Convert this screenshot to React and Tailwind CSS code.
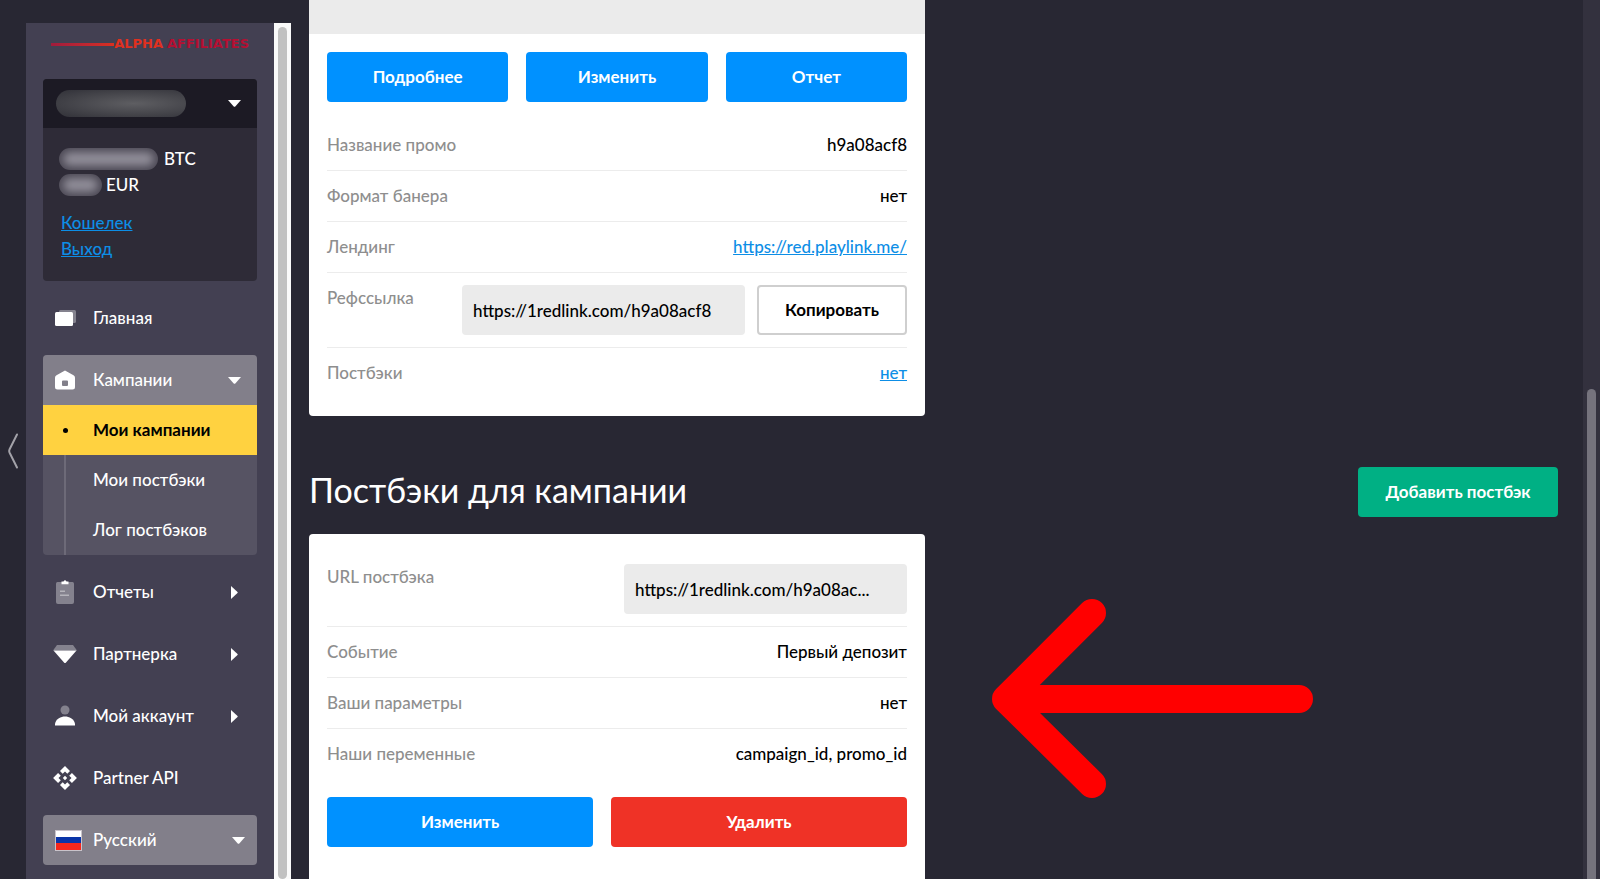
import { useState } from 'react'
import { MdApi } from 'react-icons/md'

const menuItems = [
  { title: "Отчеты", icon: <ReportsIcon />, arrow: true },
  { title: "Партнерка", icon: <DiamondIcon />, arrow: true },
  { title: "Мой аккаунт", icon: <AccountIcon />, arrow: true },
  { title: "Partner API", icon: <MdApi className="h-[26px] w-[26px]" />, arrow: false },
]

const promoButtons = ["Подробнее", "Изменить", "Отчет"]

function HomeIcon() {
  return (
    <svg className="h-6 w-6" viewBox="0 0 24 24" fill="#fff">
      <rect x="6" y="4" width="17" height="13" rx="1.5" opacity="0.35" />
      <rect x="2" y="6" width="18" height="14" rx="1.5" />
    </svg>
  )
}

function CampaignIcon() {
  return (
    <svg className="h-6 w-6" viewBox="0 0 24 24" fill="#fff" fillRule="evenodd">
      <path d="M12 2.500 20.500 7.300Q22 8.200 22 9.800V19Q22 21.500 19.500 21.500H4.500Q2 21.500 2 19V9.800Q2 8.200 3.500 7.300ZM10 12.500Q9 12.500 9 13.500V17Q9 18 10 18H14Q15 18 15 17V13.500Q15 12.500 14 12.500Z" />
    </svg>
  )
}

function ReportsIcon() {
  return (
    <svg className="h-6 w-6" viewBox="0 0 24 24" fill="#fff">
      <path d="M4.500 2H19.500Q21 2 21 3.500V22Q21 24 19 24H5Q3 24 3 22V3.500Q3 2 4.500 2Z" opacity="0.35" />
      <path d="M8.500 1.500H10.500Q12 -0.800 13.500 1.500H15.500V4.200H8.500Z" />
      <path d="M7 10.500H12V12H7ZM7 14.500H16V16H7Z" opacity="0.4" />
    </svg>
  )
}

function DiamondIcon() {
  return (
    <svg className="h-6 w-6" viewBox="0 0 24 24" fill="#fff">
      <path d="M4 3H20L24 8.500H0Z" opacity="0.35" />
      <path d="M0.500 8.500H23.500L13 20.500Q12 21.500 11 20.500Z" />
    </svg>
  )
}

function AccountIcon() {
  return (
    <svg className="h-6 w-6" viewBox="0 0 24 24" fill="#fff">
      <circle cx="12" cy="6" r="4.500" opacity="0.35" />
      <path d="M2 21.500V20C3 14.500 8 12.500 12 12.500S21 14.500 22 20V21.500Z" />
    </svg>
  )
}

function CaretDown() {
  return (
    <svg className="h-[7px] w-[13px]" viewBox="0 0 13 7" fill="#fff">
      <path d="M0 0H13L7.500 6.200Q6.500 7.200 5.500 6.200Z" />
    </svg>
  )
}

function CaretRight() {
  return (
    <svg className="mr-[3px] h-[13px] w-[7px]" viewBox="0 0 7 13" fill="#fff">
      <path d="M0 0V13L6.500 7Q7 6.500 6.500 6Z" />
    </svg>
  )
}

function RuFlag() {
  return (
    <svg className="h-[21px] w-[27px]" viewBox="0 0 27 21">
      <rect width="27" height="21" fill="#c9c3ca" />
      <rect x="1" y="1" width="25" height="6" fill="#fff" />
      <rect x="1" y="7" width="25" height="6" fill="#0b35a8" />
      <rect x="1" y="13" width="25" height="7" fill="#f5271c" />
    </svg>
  )
}

function Row({ label, htmlFor, last, children }) {
  return (
    <div className={last ? "flex items-start justify-between py-3" : "flex items-start justify-between border-b border-[#ececec] py-3"}>
      {
        htmlFor ?
          <label htmlFor={ htmlFor } className="text-[#8e8e8e]">{ label }</label>
          :
          <div className="text-[#8e8e8e]">{ label }</div>
      }
      { children }
    </div>
  )
}

function Sidebar() {

  const [language, setLanguage] = useState("ru")

  const handleLanguageChange = (event) => {
    setLanguage(event.target.value)
  }

  return (
    <aside className="flex shrink-0 pt-[23px] text-white">
      <button aria-label="Свернуть меню" className="flex w-[26px] items-center justify-center">
        <svg className="h-9 w-3" viewBox="0 0 12 36" fill="none" stroke="#a3a2a9" strokeWidth="2" strokeLinecap="round">
          <path d="M10 1.500 2.500 16.500Q1.800 18 2.500 19.500L10 34.500" />
        </svg>
      </button>

      <div className="w-[248px] bg-[#434052] px-[17px]">
        <a href="#" className="mx-2 flex h-14 items-start pt-3.5 font-['DejaVu_Sans'] text-[13px] leading-[14px] font-bold whitespace-nowrap">
          <span className="mt-[6px] h-[3px] flex-1 bg-linear-to-r from-[#a01c3c] to-[#d9301f]"></span>
          <span className="text-[#e0301f]">ALPHA</span>
          <span className="ml-1 text-[#b50f32]">AFFILIATES</span>
        </a>

        <div className="rounded bg-[#2e2b37]">
          <button className="flex h-[49px] w-full items-center justify-between rounded-t bg-[#1c1a24] pr-4 pl-[13px]" aria-label="Аккаунт">
            <span className="h-[27px] w-[130px] rounded-full bg-radial-[at_60%_50%] from-[#5e5e62] to-[#313138]"></span>
            <CaretDown />
          </button>
          <div className="px-4 pt-[18px] pb-[19px] leading-[26px]">
            <div className="flex items-center gap-[6px]">
              <span className="h-[22px] w-[99px] overflow-hidden rounded-full bg-[#4b4854] p-1">
                <span className="block h-full rounded-full bg-[#908d98] blur-[4px]"></span>
              </span>
              BTC
            </div>
            <div className="flex items-center gap-1">
              <span className="h-[22px] w-[43px] overflow-hidden rounded-full bg-[#4b4854] p-1">
                <span className="block h-full rounded-full bg-[#908d98] blur-[4px]"></span>
              </span>
              EUR
            </div>
            <div className="mt-3 flex flex-col items-start pl-[2px]">
              <a href="#" className="text-[#0d8ee6] underline">Кошелек</a>
              <a href="#" className="text-[#0d8ee6] underline">Выход</a>
            </div>
          </div>
        </div>

        <nav className="mt-3 flex flex-col gap-3">
          <a href="#" className="flex h-[50px] items-center pr-4">
            <span className="flex w-11 justify-center"><HomeIcon /></span>
            <span className="ml-[6px]">Главная</span>
          </a>

          <div className="overflow-hidden rounded bg-[#565363]">
            <button className="flex h-[50px] w-full items-center bg-[#827f8a] pr-4 text-left">
              <span className="flex w-11 justify-center"><CampaignIcon /></span>
              <span className="ml-[6px] flex-1">Кампании</span>
              <CaretDown />
            </button>
            <a href="#" className="flex h-[50px] items-center bg-[#ffd240] font-bold text-black">
              <span className="flex w-11 justify-center"><span className="h-[5px] w-[5px] rounded-full bg-black"></span></span>
              <span className="ml-[6px]">Мои кампании</span>
            </a>
            <div className="flex">
              <span className="flex w-11 justify-center"><span className="w-[2px] bg-[#6d6a78]"></span></span>
              <div className="ml-[6px] flex flex-col">
                <a href="#" className="leading-[50px]">Мои постбэки</a>
                <a href="#" className="leading-[50px]">Лог постбэков</a>
              </div>
            </div>
          </div>

          {
            menuItems.map((item, index) =>
              <a href="#" key={ index } className="flex h-[50px] items-center pr-4">
                <span className="flex w-11 justify-center">{ item.icon }</span>
                <span className="ml-[6px] flex-1">{ item.title }</span>
                { item.arrow && <CaretRight /> }
              </a>
            )
          }

          <div className="grid items-center rounded bg-[#827f8a] *:col-start-1 *:row-start-1">
            <span className="ml-3"><RuFlag /></span>
            <span className="mr-3 justify-self-end"><CaretDown /></span>
            <select aria-label="Язык" value={ language } onChange={ handleLanguageChange }
            className="h-[50px] w-full appearance-none bg-transparent pl-[50px] outline-none">
              <option value="ru">Русский</option>
              <option value="en">English</option>
            </select>
          </div>
        </nav>
      </div>

      <div className="w-[17px] bg-[#fafafa] px-1 pt-1">
        <div className="mx-auto h-full w-[9px] rounded-full bg-[#c1c1c1]"></div>
      </div>
    </aside>
  )
}

function App() {
  return (
    <div className="flex h-screen overflow-hidden bg-[#282733] font-[Lato,sans-serif] text-[17px] leading-[26px] font-medium">
      <Sidebar />

      <main className="min-w-0 flex-1 pr-[25px] pl-[18px]">
        <section className="w-full max-w-[616px] overflow-hidden rounded-b bg-white">
          <div className="h-[34px] bg-[#ebebeb]"></div>
          <div className="p-[18px]">
            <div className="grid grid-cols-3 gap-[18px] pb-[18px]">
              {
                promoButtons.map((title, index) =>
                  <button key={ index } className="h-[50px] rounded bg-[#0091ff] font-bold text-white">{ title }</button>
                )
              }
            </div>
            <Row label="Название промо"><span>h9a08acf8</span></Row>
            <Row label="Формат банера"><span>нет</span></Row>
            <Row label="Лендинг"><a href="#" className="text-[#0d8ee6] underline">https://red.playlink.me/</a></Row>
            <Row label="Рефссылка" htmlFor="refLink">
              <div className="flex gap-3">
                <input id="refLink" readOnly value="https://1redlink.com/h9a08acf8"
                className="h-[50px] w-[283px] rounded bg-[#ebebeb] px-[11px] outline-none"></input>
                <button className="h-[50px] w-[150px] rounded border-2 border-[#cfcfcf] font-bold">Копировать</button>
              </div>
            </Row>
            <Row label="Постбэки" last><a href="#" className="text-[#0d8ee6] underline">нет</a></Row>
          </div>
        </section>

        <div className="mt-[51px] flex items-start justify-between">
          <h1 className="text-[34px] leading-[46px] font-normal text-white">Постбэки для кампании</h1>
          <button className="h-[50px] w-[200px] rounded bg-[#00b084] font-bold text-white">Добавить постбэк</button>
        </div>

        <div className="mt-[17px] flex items-start gap-[67px]">
          <section className="w-full max-w-[616px] rounded bg-white px-[18px] pt-[18px] pb-9">
            <Row label="URL постбэка" htmlFor="postbackUrl">
              <input id="postbackUrl" readOnly value="https://1redlink.com/h9a08ac..."
              className="h-[50px] w-[283px] rounded bg-[#ebebeb] px-[11px] outline-none"></input>
            </Row>
            <Row label="Событие"><span>Первый депозит</span></Row>
            <Row label="Ваши параметры"><span>нет</span></Row>
            <Row label="Наши переменные" last><span>campaign_id, promo_id</span></Row>
            <div className="mt-[18px] grid grid-cols-[9fr_10fr] gap-[18px]">
              <button className="h-[50px] rounded bg-[#0091ff] font-bold text-white">Изменить</button>
              <button className="h-[50px] rounded bg-[#ef3226] font-bold text-white">Удалить</button>
            </div>
          </section>

          <svg className="mt-16 h-[200px] w-[322px] shrink-0" viewBox="0 0 322 200" fill="none" stroke="#ff0000" strokeWidth="28" strokeLinecap="round" strokeLinejoin="round">
            <path d="M100 15 14 101 100 186M14 101H307" />
          </svg>
        </div>
      </main>

      <div className="w-[17px] bg-[#33313e] pt-[389px]">
        <div className="mx-auto h-full w-[9px] rounded-t-full bg-[#75737d]"></div>
      </div>
    </div>
  )
}

export default App
